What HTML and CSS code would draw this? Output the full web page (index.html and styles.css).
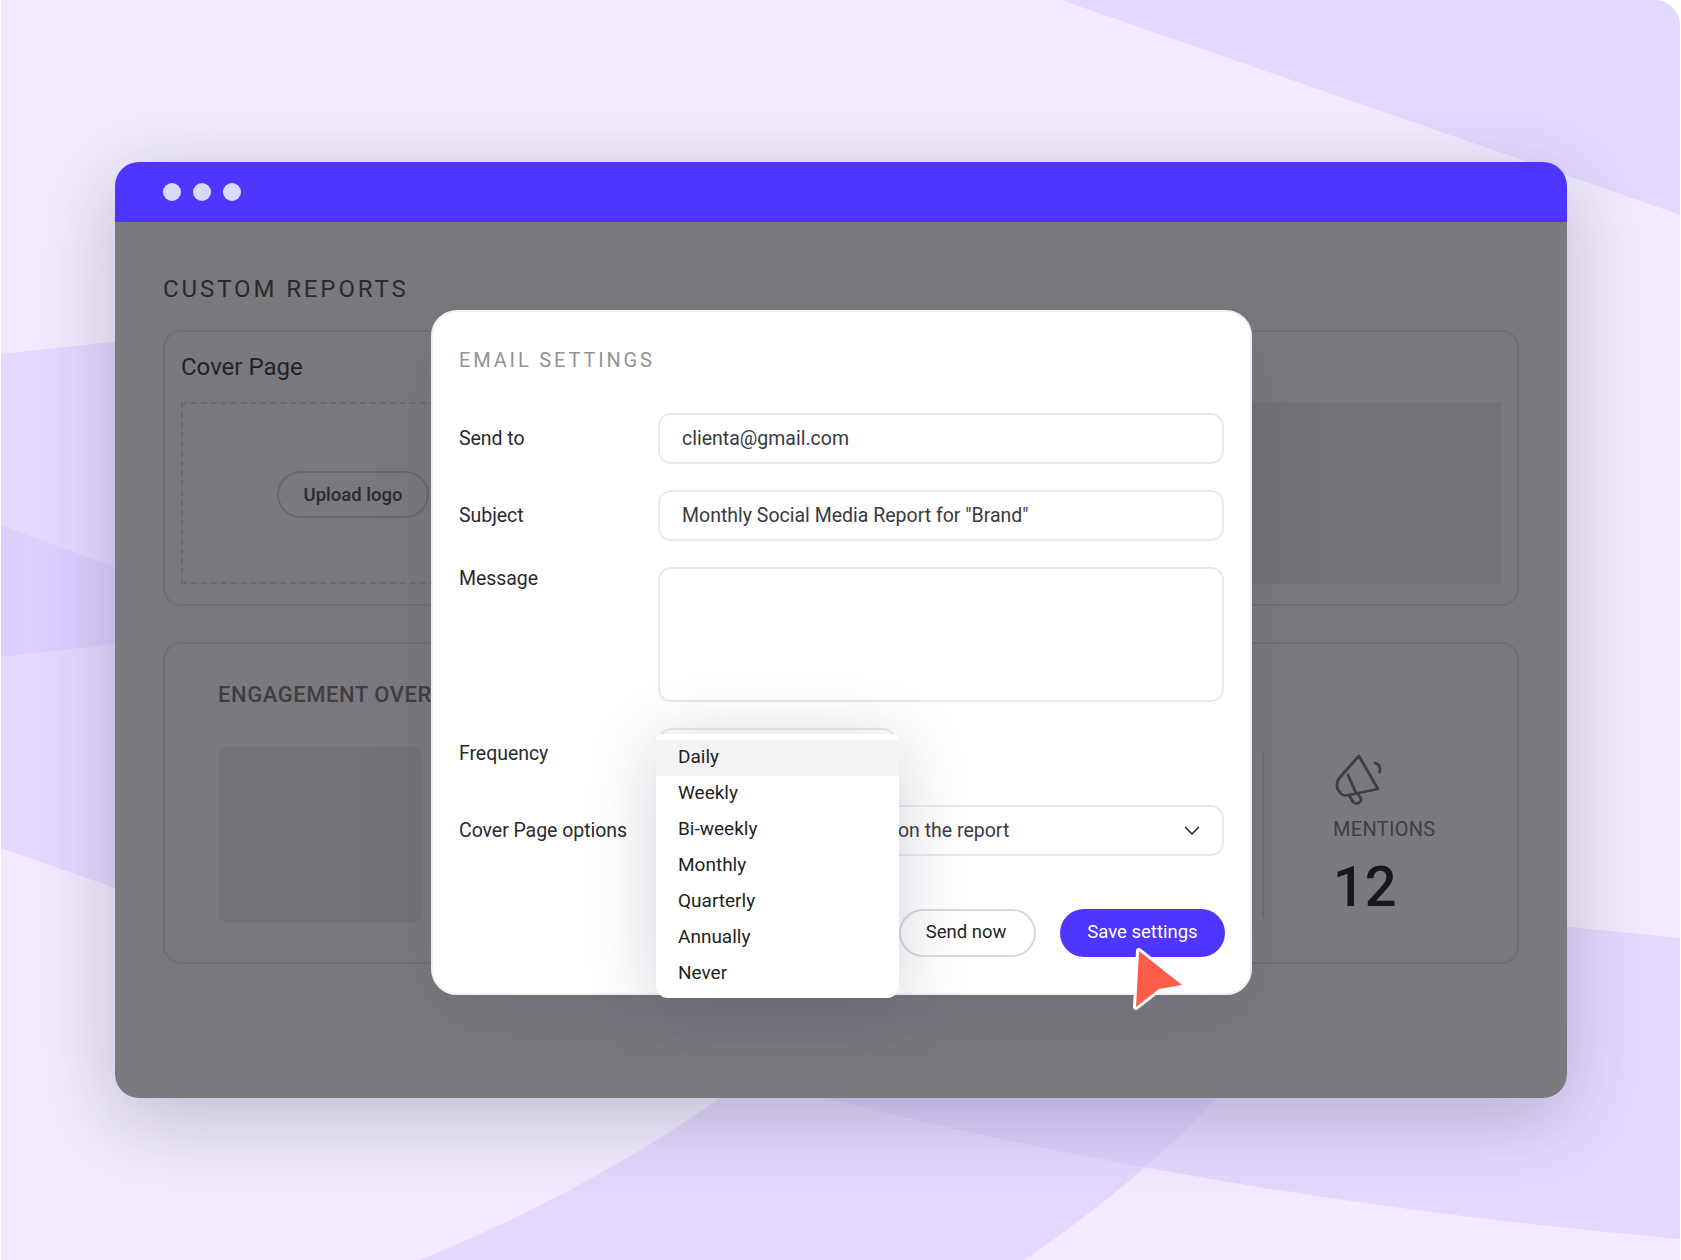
FILE: index.html
```html
<!DOCTYPE html>
<html lang="en">
<head>
    <meta charset="UTF-8">
    <meta name="viewport" content="width=device-width, initial-scale=1.0">
    <title>Custom Reports - Email Settings</title>
    <link rel="stylesheet" href="styles.css">
</head>
<body>
    <div class="page">
        <svg class="backdrop" viewBox="0 0 1681 1260" aria-hidden="true">
            <path d="M1061 0 L1681 0 L1681 215 Z"/>
            <path d="M0 354 L130 340 L130 642 L0 657 Z"/>
            <path d="M0 525 L130 573 L130 893 L0 848 Z"/>
            <path d="M720 1098 Q590 1190 420 1260 L1024 1260 Q1135 1185 1217 1098 Z"/>
            <path d="M825 1098 Q1230 1200 1681 1239 L1681 938 L1500 920 L1500 1098 Z"/>
        </svg>

        <div class="window">
            <div class="titlebar">
                <span class="dot"></span>
                <span class="dot"></span>
                <span class="dot"></span>
            </div>
            <div class="content">
                <h1>CUSTOM REPORTS</h1>

                <section class="card cover-card">
                    <h2>Cover Page</h2>
                    <div class="cover-row">
                        <div class="logo-drop">
                            <span class="upload-btn">Upload logo</span>
                        </div>
                        <div class="cover-image"></div>
                    </div>
                </section>

                <section class="card engagement-card">
                    <div class="engagement-main">
                        <h3>ENGAGEMENT OVERVIEW</h3>
                        <div class="chart-box"></div>
                    </div>
                    <div class="stat">
                        <svg class="stat-icon" viewBox="0 0 50 54" fill="none" stroke="#3f3e44" stroke-width="2.8" stroke-linecap="round" stroke-linejoin="round">
                            <path d="M24 2 L43 35 L14 41 C10 42 7 42 4 37 C1 33 1 27 6 22 Z"/>
                            <path d="M13 21 L21 39"/>
                            <path d="M14 41 L18 48 C20 50 24 50 26 47 C26.5 45 26 44 22 39"/>
                            <path d="M40 9 C44 10 46 13 44.5 18"/>
                        </svg>
                        <div class="stat-label">MENTIONS</div>
                        <div class="stat-value">12</div>
                    </div>
                </section>

                <div class="modal">
                    <div class="modal-title">EMAIL SETTINGS</div>

                    <div class="form-row">
                        <label>Send to</label>
                        <div class="field">clienta@gmail.com</div>
                    </div>
                    <div class="form-row">
                        <label>Subject</label>
                        <div class="field">Monthly Social Media Report for "Brand"</div>
                    </div>
                    <div class="form-row message-row">
                        <label>Message</label>
                        <div class="field field-area"></div>
                    </div>
                    <div class="form-row">
                        <label>Frequency</label>
                        <div class="freq-wrap">
                            <div class="field freq-field"></div>
                            <ul class="dropdown">
                                <li class="active">Daily</li>
                                <li>Weekly</li>
                                <li>Bi-weekly</li>
                                <li>Monthly</li>
                                <li>Quarterly</li>
                                <li>Annually</li>
                                <li>Never</li>
                            </ul>
                        </div>
                    </div>
                    <div class="form-row">
                        <label>Cover Page options</label>
                        <div class="field field-select">
                            <span>on the report</span>
                            <svg class="chevron" viewBox="0 0 16 10" fill="none" stroke="#2b2b30" stroke-width="1.6" stroke-linecap="round" stroke-linejoin="round">
                                <path d="M1.5 1.5 L8 8 L14.5 1.5"/>
                            </svg>
                        </div>
                    </div>

                    <div class="actions">
                        <button class="btn btn-outline">Send now</button>
                        <button class="btn btn-primary">Save settings</button>
                    </div>

                    <svg class="cursor" viewBox="0 0 60 70">
                        <path d="M8 7 L51 41 L28 45 L5 63 Z"/>
                    </svg>
                </div>
            </div>
        </div>
    </div>
</body>
</html>
```

FILE: styles.css
```css
* {
    box-sizing: border-box;
}
body {
    margin: 0;
    font-family: Roboto, "Noto Sans", sans-serif;
    color: #2a2a2e;
    background-color: white;
}
.page {
    position: relative;
    width: 1681px;
    height: 1260px;
    overflow: hidden;
    background-color: #f2ebff;
    border-left: 1px solid white;
    border-right: 1px solid white;
    border-radius: 0 26px 0 0;
    padding: 162px 113px 0 114px;
}
.backdrop {
    position: absolute;
    top: 0;
    left: -1px;
    width: 1681px;
    height: 1260px;
}
.backdrop path {
    fill: #d6c6ff;
    fill-opacity: 0.5;
}
.window {
    position: relative;
    height: 936px;
    border-radius: 24px;
    overflow: hidden;
    box-shadow: 0 20px 80px rgba(60,60,80,0.28);
}
.titlebar {
    display: flex;
    align-items: center;
    gap: 12px;
    height: 60px;
    padding-left: 48px;
    background-color: #4f36ff;
}
.dot {
    width: 18px;
    height: 18px;
    border-radius: 50%;
    background-color: #dcd7ff;
}
.content {
    position: relative;
    height: 876px;
    padding: 53px 48px 0;
    background-color: #7a797e;
}
h1 {
    margin: 0 0 27px;
    font-size: 24px;
    line-height: 28px;
    font-weight: 400;
    letter-spacing: 2.9px;
    color: #2b2a2f;
}
.card {
    border: 2px solid #706f74;
    border-radius: 18px;
}
.cover-card {
    height: 276px;
    padding: 0 16px;
}
h2 {
    margin: 0;
    height: 70px;
    font-size: 24px;
    line-height: 70px;
    font-weight: 400;
    color: #232227;
}
.cover-row {
    display: flex;
    gap: 15px;
    height: 182px;
}
.logo-drop {
    display: flex;
    align-items: center;
    justify-content: center;
    width: 344px;
    border: 2px dashed #6c6b70;
}
.upload-btn {
    display: flex;
    align-items: center;
    justify-content: center;
    width: 152px;
    height: 47px;
    margin-top: 3px;
    border: 2px solid #69686d;
    border-radius: 24px;
    font-size: 18.5px;
    font-weight: 500;
    color: #2b2a2f;
}
.cover-image {
    flex: 1;
    background-color: #737277;
}
.engagement-card {
    display: flex;
    justify-content: space-between;
    height: 322px;
    margin-top: 36px;
    padding: 38px 0 0 53px;
}
h3 {
    margin: 0 0 39px;
    font-size: 22px;
    line-height: 26px;
    font-weight: 500;
    letter-spacing: 0.55px;
    color: #3f3e44;
}
.chart-box {
    width: 204px;
    height: 176px;
    border-radius: 10px;
    background-color: #737277;
}
.stat {
    width: 255px;
    height: 165px;
    margin-top: 71px;
    padding-left: 69px;
    border-left: 2px solid #6e6d72;
}
.stat-icon {
    display: block;
    width: 50px;
    height: 54px;
    margin: 1px 0 0 2px;
}
.stat-label {
    margin-top: 8px;
    font-size: 20px;
    line-height: 26px;
    letter-spacing: 0.3px;
    color: #3f3e44;
}
.stat-value {
    margin-top: 15px;
    font-size: 56px;
    line-height: 60px;
    font-weight: 500;
    color: #18171c;
}
.modal {
    position: absolute;
    left: 316px;
    top: 88px;
    width: 821px;
    height: 685px;
    padding: 34px 26px 0 26px;
    background-color: white;
    border: 2px solid #f0f0f3;
    border-radius: 26px;
    box-shadow: 0 20px 80px rgba(40,40,70,0.12);
}
.modal-title {
    height: 67px;
    font-size: 20px;
    line-height: 28px;
    letter-spacing: 2.85px;
    color: #929295;
}
.form-row {
    display: grid;
    grid-template-columns: 199px 566px;
    align-items: center;
    min-height: 51px;
    margin-bottom: 26px;
    font-size: 19.5px;
}
.form-row label {
    padding-bottom: 1px;
    letter-spacing: -0.05px;
    color: #2a2a2e;
}
.field {
    display: flex;
    align-items: center;
    height: 51px;
    padding: 0 22px 1px;
    border: 2px solid #e9e9ec;
    border-radius: 13px;
    color: #3a3a3e;
}
.message-row {
    align-items: start;
}
.field-area {
    height: 135px;
}
.freq-wrap {
    position: relative;
}
.freq-field {
    width: 238px;
}
.dropdown {
    position: absolute;
    left: -2px;
    top: 6px;
    width: 243px;
    margin: 0;
    padding: 6px 0;
    list-style: none;
    background-color: white;
    border-radius: 6px 6px 12px 12px;
    box-shadow: 0 10px 70px rgba(70,70,110,0.24);
    z-index: 2;
}
.dropdown li {
    height: 36px;
    padding-left: 22px;
    font-size: 19px;
    line-height: 34px;
    color: #1f1f23;
}
.dropdown li.active {
    background-color: #f3f3f5;
}
.field-select {
    justify-content: space-between;
    padding-left: 238px;
}
.chevron {
    width: 16px;
    height: 10px;
    margin-top: 2px;
}
.actions {
    display: flex;
    justify-content: flex-end;
    gap: 24px;
    margin-top: 53px;
    width: 766px;
}
.btn {
    height: 48px;
    padding: 0 0 2px;
    border-radius: 24px;
    font-family: inherit;
    font-size: 18.5px;
    cursor: pointer;
}
.btn-outline {
    width: 137px;
    padding-right: 3px;
    background-color: white;
    border: 2px solid #d9d9dc;
    color: #1f1f23;
}
.btn-primary {
    width: 165px;
    background-color: #4f36ff;
    border: none;
    color: white;
}
.cursor {
    position: absolute;
    left: 698px;
    top: 632px;
    width: 60px;
    height: 70px;
    z-index: 3;
}
.cursor path {
    fill: #ff5c4a;
    stroke: white;
    stroke-width: 6px;
    stroke-linejoin: round;
    paint-order: stroke;
}
```
